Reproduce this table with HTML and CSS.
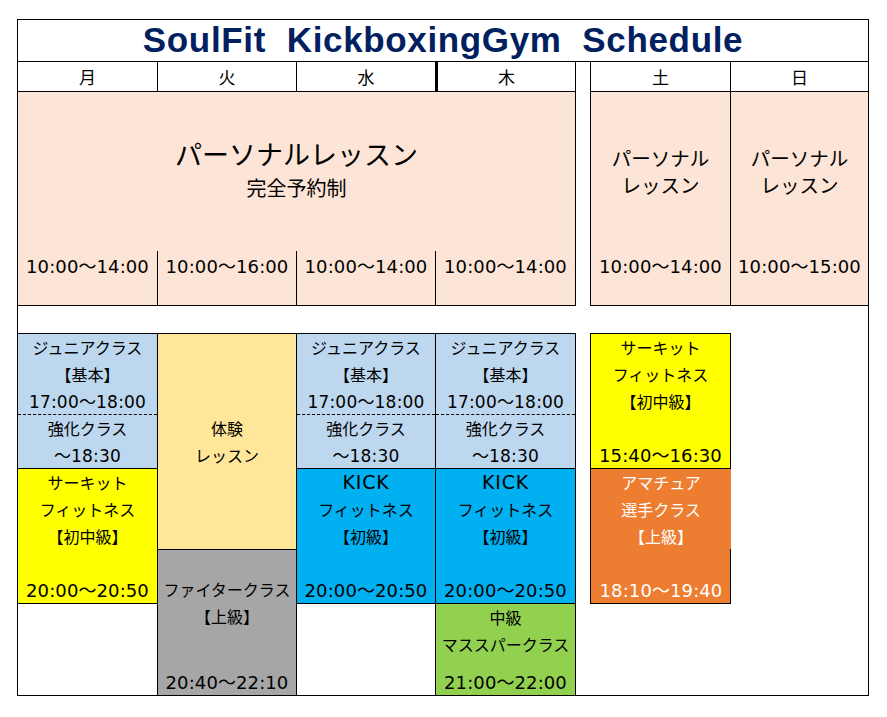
FILE: index.html
```html
<!DOCTYPE html>
<html lang="ja">
<head>
<meta charset="utf-8">
<title>SoulFit KickboxingGym Schedule</title>
<link rel="stylesheet" href="styles.css">
</head>
<body>
<div class="sheet">
  <div class="title">SoulFit  KickboxingGym  Schedule</div>

  <div class="day c1">月</div>
  <div class="day c2">火</div>
  <div class="day c3 wed">水</div>
  <div class="day c4 thu">木</div>
  <div class="day c6 sat">土</div>
  <div class="day c7 sun">日</div>

  <div class="personal">
    <div class="p-big">パーソナルレッスン</div>
    <div class="p-sub">完全予約制</div>
  </div>
  <div class="ptime c1">10:00～14:00</div>
  <div class="ptime c2">10:00～16:00</div>
  <div class="ptime c3">10:00～14:00</div>
  <div class="ptime c4">10:00～14:00</div>

  <div class="wk-top c6 sat">パーソナル<br>レッスン</div>
  <div class="ptime c6 sat">10:00～14:00</div>
  <div class="wk-top c7">パーソナル<br>レッスン</div>
  <div class="ptime c7 sun">10:00～15:00</div>

  <div class="cls junior c1">
    <div class="upper">
      <div class="ln">ジュニアクラス</div>
      <div class="ln">【基本】</div>
      <div class="ln tm sm">17:00～18:00</div>
    </div>
    <div class="lower">
      <div class="ln">強化クラス</div>
      <div class="ln tm sm">～18:30</div>
    </div>
  </div>
  <div class="cls trial">
    <div class="ln">体験</div>
    <div class="ln">レッスン</div>
  </div>
  <div class="cls junior c3">
    <div class="upper">
      <div class="ln">ジュニアクラス</div>
      <div class="ln">【基本】</div>
      <div class="ln tm sm">17:00～18:00</div>
    </div>
    <div class="lower">
      <div class="ln">強化クラス</div>
      <div class="ln tm sm">～18:30</div>
    </div>
  </div>
  <div class="cls junior c4">
    <div class="upper">
      <div class="ln">ジュニアクラス</div>
      <div class="ln">【基本】</div>
      <div class="ln tm sm">17:00～18:00</div>
    </div>
    <div class="lower">
      <div class="ln">強化クラス</div>
      <div class="ln tm sm">～18:30</div>
    </div>
  </div>
  <div class="cls sat-circuit">
    <div class="ln">サーキット</div>
    <div class="ln">フィットネス</div>
    <div class="ln">【初中級】</div>
    <div class="ln tm end">15:40～16:30</div>
  </div>

  <div class="cls circuit">
    <div class="ln">サーキット</div>
    <div class="ln">フィットネス</div>
    <div class="ln">【初中級】</div>
    <div class="ln tm end">20:00～20:50</div>
  </div>
  <div class="cls kick c3">
    <div class="ln latin">KICK</div>
    <div class="ln">フィットネス</div>
    <div class="ln">【初級】</div>
    <div class="ln tm end">20:00～20:50</div>
  </div>
  <div class="cls kick c4">
    <div class="ln latin">KICK</div>
    <div class="ln">フィットネス</div>
    <div class="ln">【初級】</div>
    <div class="ln tm end">20:00～20:50</div>
  </div>
  <div class="cls amateur">
    <div class="ln">アマチュア</div>
    <div class="ln">選手クラス</div>
    <div class="ln">【上級】</div>
    <div class="ln tm end">18:10～19:40</div>
  </div>

  <div class="cls fighter">
    <div class="ln">ファイタークラス</div>
    <div class="ln">【上級】</div>
    <div class="ln tm end">20:40～22:10</div>
  </div>
  <div class="blank c1"></div>
  <div class="blank c3"></div>
  <div class="cls mass">
    <div class="ln">中級</div>
    <div class="ln">マススパークラス</div>
    <div class="ln tm end">21:00～22:00</div>
  </div>
</div>
</body>
</html>
```

FILE: styles.css
```css
* {
  box-sizing: border-box;
}

body {
  margin: 0;
  padding: 19px 0 0 17px;
  background: #ffffff;
  color: #000000;
  font-family: "Noto Sans CJK JP", "Noto Sans", sans-serif;
}

.sheet {
  display: grid;
  width: max-content;
  grid-template-columns: 140px 139px 139px 140px 14px 141px 137px;
  grid-template-rows: 42px 30px 159px 55px 27px 136px 81px 54px 91px;
  border: 1px solid #000;
}

.c1 { grid-column: 1; }
.c2 { grid-column: 2; }
.c3 { grid-column: 3; }
.c4 { grid-column: 4; }
.c6 { grid-column: 6; }
.c7 { grid-column: 7; }

/* Title */
.title {
  grid-column: 1 / -1;
  grid-row: 1;
  border-bottom: 1px solid #000;
  display: flex;
  align-items: center;
  justify-content: center;
  white-space: pre;
  font-family: "Liberation Sans", Arial, sans-serif;
  font-weight: bold;
  font-size: 35px;
  letter-spacing: 0.65px;
  color: #002060;
  padding-bottom: 2px;
}

/* Day header */
.day {
  grid-row: 2;
  border-right: 1px solid #000;
  border-bottom: 1px solid #000;
  display: flex;
  align-items: center;
  justify-content: center;
  font-size: 17px;
}
.day.thu { border-left: 2px solid #000; }
.day.sat { border-left: 1px solid #000; }
.day.sun { border-right: none; }

/* Personal lessons */
.personal {
  grid-column: 1 / 5;
  grid-row: 3;
  background: #FCE4D6;
  border-right: 1px solid #000;
  text-align: center;
  padding-top: 42px;
}
.p-big {
  font-size: 27px;
  line-height: 39px;
}
.p-sub {
  font-size: 20px;
  line-height: 29px;
}

.ptime {
  grid-row: 4;
  background: #FCE4D6;
  border-right: 1px solid #000;
  border-bottom: 1px solid #000;
  text-align: center;
  font-family: "DejaVu Sans", "Noto Sans CJK JP", sans-serif;
  font-size: 18px;
  line-height: 30px;
  letter-spacing: 0.1px;
  padding-top: 1px;
}
.ptime.sat { border-left: 1px solid #000; }
.ptime.sun { border-right: none; }

.wk-top {
  grid-row: 3;
  background: #FCE4D6;
  text-align: center;
  font-size: 19.5px;
  line-height: 27px;
  padding-top: 52px;
}
.wk-top.sat {
  border-left: 1px solid #000;
  border-right: 1px solid #000;
}

/* Class cells */
.cls {
  display: flex;
  flex-direction: column;
  text-align: center;
  font-size: 16px;
  line-height: 26.8px;
}
.tm {
  font-family: "DejaVu Sans", "Noto Sans CJK JP", sans-serif;
  font-size: 18px;
  letter-spacing: 0.1px;
  padding-top: 4px;
  line-height: 22.8px;
}
.tm.sm {
  font-size: 17px;
  letter-spacing: 0.2px;
  line-height: 22.6px;
}
.latin {
  font-family: "DejaVu Sans", "Noto Sans CJK JP", sans-serif;
  font-size: 19px;
  letter-spacing: 0.8px;
}
.end { margin-top: auto; }

.junior {
  grid-row: 6;
  background: #BDD7EE;
  border-top: 1px solid #000;
  border-right: 1px solid #000;
  border-bottom: 1px solid #000;
}
.junior .upper {
  height: 81px;
  border-bottom: 1px dashed #000;
  line-height: 26.67px;
}
.junior .lower {
  line-height: 26.5px;
}

.trial {
  grid-column: 2;
  grid-row: 6 / 8;
  background: #FFE699;
  border-top: 1px solid #000;
  border-right: 1px solid #000;
  border-bottom: 1px solid #000;
  padding-top: 81px;
  line-height: 27px;
}

.sat-circuit {
  grid-column: 6;
  grid-row: 6;
  background: #FFFF00;
  border: 1px solid #000;
}

.circuit {
  grid-column: 1;
  grid-row: 7 / 9;
  background: #FFFF00;
  border-right: 1px solid #000;
  border-bottom: 1px solid #000;
}

.kick {
  grid-row: 7 / 9;
  background: #00B0F0;
  border-right: 1px solid #000;
  border-bottom: 1px solid #000;
}

.amateur {
  grid-column: 6;
  grid-row: 7 / 9;
  color: #ffffff;
  background: linear-gradient(#000, #000) right bottom / 1px 54px no-repeat, #ED7D31;
  border-left: 1px solid #000;
  border-bottom: 1px solid #000;
}

.fighter {
  grid-column: 2;
  grid-row: 8 / 10;
  background: #A6A6A6;
  border-right: 1px solid #000;
  padding-top: 26px;
  line-height: 27px;
}

.blank {
  grid-row: 9;
  border-right: 1px solid #000;
}

.mass {
  grid-column: 4;
  grid-row: 9;
  background: #92D050;
  border-right: 1px solid #000;
  line-height: 27px;
}
```
